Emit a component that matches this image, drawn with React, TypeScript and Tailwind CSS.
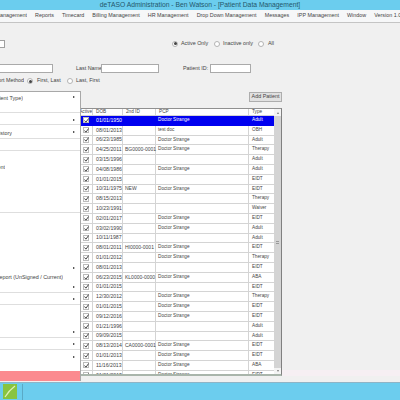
const DS = "Doctor Strange";
const rows: [string, string, string, string][] = [
  ["01/01/1950", "", DS, "Adult"],
  ["08/01/2013", "", "test doc", "OBH"],
  ["06/23/1985", "", DS, "Adult"],
  ["04/25/2011", "BG0000-0001", DS, "Therapy"],
  ["03/15/1996", "", "", "Adult"],
  ["04/08/1986", "", DS, "Adult"],
  ["01/01/2015", "", "", "EIDT"],
  ["10/31/1975", "NEW", DS, "EIDT"],
  ["08/15/2013", "", "", "Therapy"],
  ["10/23/1991", "", "", "Waiver"],
  ["02/01/2017", "", DS, "EIDT"],
  ["03/02/1990", "", DS, "Adult"],
  ["10/11/1987", "", "", "Adult"],
  ["08/01/2011", "HI0000-0001", DS, "EIDT"],
  ["01/01/2012", "", DS, "Therapy"],
  ["08/01/2013", "", "", "EIDT"],
  ["06/23/2015", "KL0000-0000", DS, "ABA"],
  ["01/01/2015", "", "", "EIDT"],
  ["12/30/2012", "", DS, "Therapy"],
  ["01/01/2015", "", DS, "EIDT"],
  ["09/12/2016", "", DS, "EIDT"],
  ["01/21/1996", "", "", "Adult"],
  ["09/09/2015", "", "", "Adult"],
  ["08/13/2014", "CA0000-0001", DS, "EIDT"],
  ["01/01/2013", "", DS, "EIDT"],
  ["11/16/2013", "", DS, "ABA"],
  ["01/01/2013", "", DS, "EIDT"],
];

const menuItems = ["Reports", "Timecard", "Billing Management", "HR Management", "Drop Down Management", "Messages", "IPP Management", "Window"];

function Radio({ on }: { on?: boolean }) {
  return (
    <span className="w-[6px] h-[6px] rounded-full border border-[#b4b4b4] bg-white flex items-center justify-center shrink-0">
      {on && <span className="w-[3px] h-[3px] rounded-full bg-[#444]" />}
    </span>
  );
}

function Check() {
  return (
    <span className="w-[6px] h-[6px] border border-[#bbb] bg-white flex items-center justify-center">
      <svg viewBox="0 0 6 6" className="w-[5px] h-[5px] shrink-0">
        <path d="M0.6 3 L2.3 5 L5.6 0.6" fill="none" stroke="#333" strokeWidth="1.1" />
      </svg>
    </span>
  );
}

function Arrow() {
  return <span className="block w-0 h-0 border-y-[1.5px] border-y-transparent border-l-[2px] border-l-[#222]" />;
}

function MenuSeg({ h, text, textW, arrows, textTop }: { h: string; text?: string; textW?: string; arrows?: string[]; textTop?: string }) {
  return (
    <div className={`relative shrink-0 border-b border-[#dedede] ${h}`}>
      {text && (
        <div className={`absolute left-0 flex justify-end whitespace-nowrap overflow-hidden h-[8px] leading-[8px] ${textW} ${textTop}`}>
          {text}
        </div>
      )}
      {arrows?.map((a) => (
        <div key={a} className={`absolute left-[73px] ${a}`}>
          <Arrow />
        </div>
      ))}
    </div>
  );
}

export default function App() {
  const cellBorder = "border-[#d4d4d4]";
  return (
    <div className="relative w-[400px] h-[400px] overflow-hidden flex flex-col bg-[#f0f0f0] text-[5.4px] leading-none text-[#444] font-['Liberation_Sans',Arial,sans-serif]">
      {/* Title bar */}
      <div className="h-[10px] shrink-0 bg-[#6bcdee] flex items-center justify-center text-[6.75px] text-[#24576b]">
        deTASO Administration - Ben Watson - [Patient Data Management]
      </div>
      {/* Menu bar */}
      <div className="h-[13px] shrink-0 bg-[#f6f7f8] border-b border-[#c4c4c4] flex items-center whitespace-nowrap">
        <span className="w-[27px] shrink-0 flex justify-end overflow-hidden">Patient Management</span>
        <div className="flex gap-[8.1px] ml-[8px]">
          {menuItems.map((m) => (
            <span key={m}>{m}</span>
          ))}
          <span>Version 1.0.0</span>
        </div>
      </div>

      {/* Form */}
      <div className="flex-1 relative flex flex-col min-h-0">
        <div className="h-[16px] shrink-0" />
        <div className="h-[9px] shrink-0 flex items-center">
          <div className="w-[5px] h-[8px] bg-white border border-[#a0a0a0] border-l-0" />
          <div className="ml-[167px] flex items-center gap-[3px]">
            <Radio on />
            <span className="whitespace-nowrap w-[33px]">Active Only</span>
          </div>
          <div className="flex items-center gap-[3px]">
            <Radio />
            <span className="whitespace-nowrap w-[35px]">Inactive only</span>
          </div>
          <div className="flex items-center gap-[3px]">
            <Radio />
            <span className="ml-[1px]">All</span>
          </div>
        </div>
        <div className="h-[16px] shrink-0" />
        <div className="h-[9px] shrink-0 flex items-center">
          <div className="w-[53px] h-[9px] shrink-0 bg-white border border-[#aaa] border-l-0" />
          <span className="ml-[23px] w-[25px] shrink-0 whitespace-nowrap">Last Name:</span>
          <div className="w-[58px] h-[9px] shrink-0 bg-white border border-[#aaa]" />
          <span className="ml-[24px] w-[27px] shrink-0 whitespace-nowrap">Patient ID:</span>
          <div className="w-[41px] h-[9px] shrink-0 bg-white border border-[#aaa]" />
        </div>
        <div className="h-[4px] shrink-0" />
        <div className="h-[8px] shrink-0 flex items-center">
          <span className="w-[24px] shrink-0 flex justify-end overflow-hidden whitespace-nowrap">Sort Method</span>
          <span className="ml-[3px]"><Radio on /></span>
          <span className="ml-[4px] w-[30px] shrink-0 whitespace-nowrap">First, Last</span>
          <Radio />
          <span className="ml-[3px] whitespace-nowrap">Last, First</span>
        </div>
        <div className="h-[7px] shrink-0" />
        <div className="h-[10px] shrink-0 flex">
          <button className="ml-[249px] w-[33px] h-[10px] bg-[#e1e1e1] border border-[#adadad] text-[5.4px] text-[#444] flex items-center justify-center whitespace-nowrap">
            Add Patient
          </button>
        </div>
        <div className="h-[6px] shrink-0" />

        {/* Data grid */}
        <div className="ml-[80px] w-[202px] h-[268px] shrink-0 border-t border-r border-b-2 border-t-[#909090] border-r-[#808080] border-b-[#a9b5ab] flex overflow-hidden bg-white text-[4.7px]">
          <div className="w-[194px] shrink-0 flex flex-col">
            <div className={`h-[7px] shrink-0 flex items-center bg-white border-b ${cellBorder}`}>
              <span className={`w-[13px] h-full flex items-center justify-end overflow-hidden whitespace-nowrap border-r ${cellBorder}`}>Active</span>
              <span className={`w-[30px] h-full flex items-center pl-[3px] border-r ${cellBorder}`}>DOB</span>
              <span className={`w-[33px] h-full flex items-center pl-[3px] border-r ${cellBorder}`}>2nd ID</span>
              <span className={`w-[93px] h-full flex items-center pl-[3px] border-r ${cellBorder}`}>PCP</span>
              <span className="w-[25px] h-full flex items-center pl-[3px]">Type</span>
            </div>
            {rows.map((r, i) => {
              const sel = i === 0;
              const b = sel ? "border-[#0000f0]" : cellBorder;
              return (
                <div
                  key={i}
                  className={`h-[9.8px] shrink-0 flex items-center border-b whitespace-nowrap ${sel ? "bg-[#0000f0] text-white" : "bg-white"} ${b}`}
                >
                  <span className={`w-[13px] h-full flex items-center justify-center border-r ${b}`}>
                    <Check />
                  </span>
                  <span className={`w-[30px] h-full flex items-center pl-[3px] border-r text-[5.2px] ${b}`}>{r[0]}</span>
                  <span className={`w-[33px] h-full flex items-center pl-[2px] border-r text-[5px] ${b}`}>{r[1]}</span>
                  <span className={`w-[93px] h-full flex items-center pl-[2px] border-r ${b}`}>{r[2]}</span>
                  <span className="w-[25px] h-full flex items-center pl-[3px]">{r[3]}</span>
                </div>
              );
            })}
          </div>
          {/* Scrollbar */}
          <div className="flex-1 bg-[#d4d4d4] flex flex-col justify-between">
            <div className="h-[7px] bg-[#f4f4f4] flex items-center justify-center">
              <span className="block w-0 h-0 border-x-[1.5px] border-x-transparent border-b-[2px] border-b-[#777]" />
            </div>
            <div className="h-[3px] mx-[2px] border-y border-[#999]" />
            <div className="h-[6px] bg-[#f4f4f4] flex items-center justify-center">
              <span className="block w-0 h-0 border-x-[1.5px] border-x-transparent border-t-[2px] border-t-[#777]" />
            </div>
          </div>
        </div>
        {/* Overlay strip + side menu */}
        <div className="absolute left-[282px] right-0 top-[347px] h-[6px] bg-[#f6eff3]" />
        <div className="absolute left-0 top-[68px] w-[81px] h-[290px] border-t border-r border-[#a8a8a8] bg-white flex flex-col">
          <MenuSeg h="h-[21px]" text="(Patient Type)" textW="w-[23px]" textTop="top-[2px]" arrows={["top-[4px]"]} />
          <MenuSeg h="h-[12px]" arrows={["top-[6px]"]} />
          <MenuSeg h="h-[14px]" text="Billing History" textW="w-[12px]" textTop="top-[4px]" arrows={["top-[6px]"]} />
          <MenuSeg h="h-[12px]" />
          <MenuSeg h="h-[62px]" text="Patient" textW="w-[5px]" textTop="top-[12px]" />
          <MenuSeg h="h-[80px]" text="Therapy Report (UnSigned / Current)" textW="w-[63px]" textTop="top-[60px]" arrows={["top-[54px]", "top-[73px]"]} />
          <MenuSeg h="h-[12px]" arrows={["top-[5px]"]} />
          <MenuSeg h="h-[33px]" arrows={["top-[26px]"]} />
          <MenuSeg h="h-[12px]" arrows={["top-[5px]"]} />
          <div className="flex-1 relative min-h-0">
            <div className="absolute left-[73px] top-[6px]"><Arrow /></div>
          </div>
          <div className="h-[10px] shrink-0 bg-[#fb8a8f]" />
        </div>
      </div>

      {/* Taskbar */}
      <div className="h-[18px] shrink-0 bg-[#6ccdee] border-t border-[#8fb4c6] flex items-center">
        <div className="ml-[3px] w-[14px] h-[15px] bg-[#88c440] flex items-center justify-center">
          <svg viewBox="0 0 14 15" className="w-[14px] h-[15px]">
            <path d="M2 13 C5 8 8 5 12 2" fill="none" stroke="#dff0b8" strokeWidth="1.2" />
          </svg>
        </div>
        <div className="ml-[5px] w-px h-[16px] bg-[#5aa9c6]" />
      </div>
    </div>
  );
}
